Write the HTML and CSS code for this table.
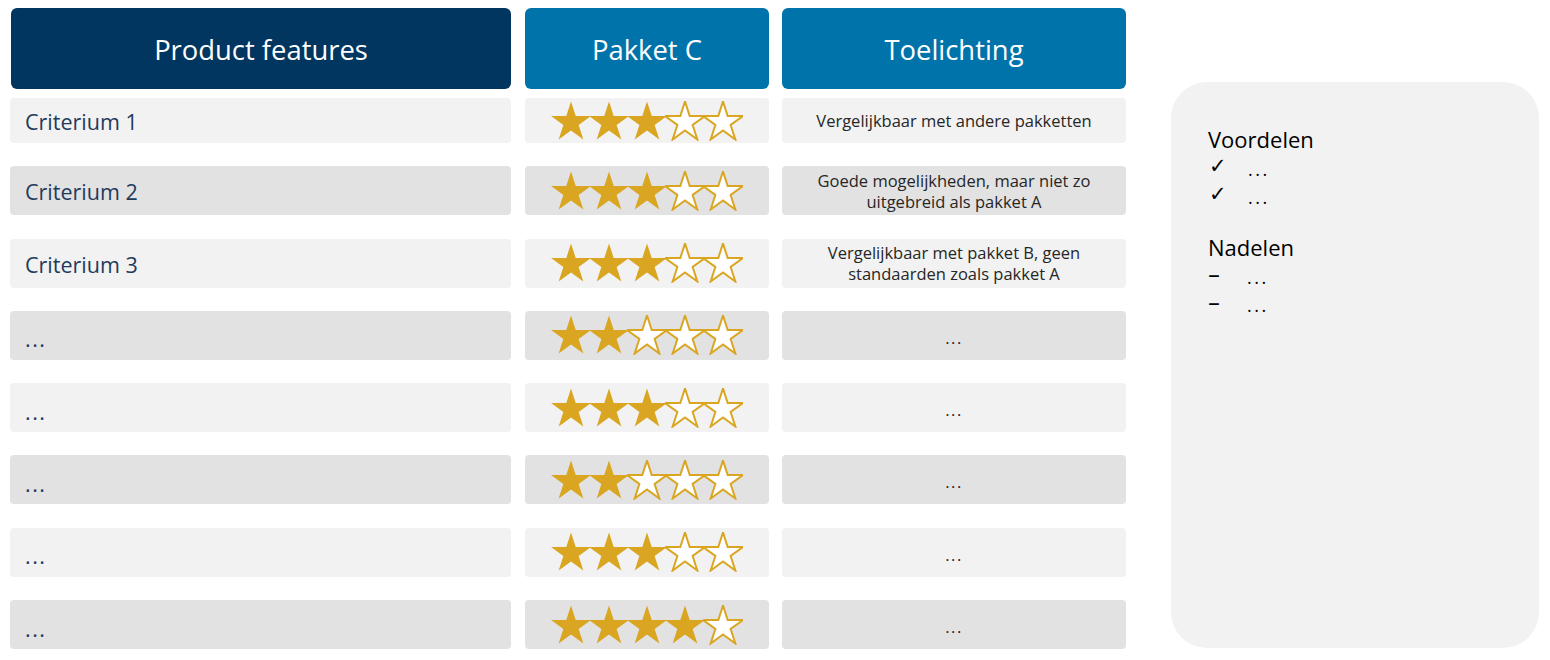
FILE: index.html
```html
<!DOCTYPE html>
<html lang="nl">
<head>
    <meta charset="UTF-8">
    <meta name="viewport" content="width=device-width, initial-scale=1.0">
    <title>Vergelijking Pakket C</title>
    <link rel="stylesheet" href="styles.css">
</head>
<body>
    <svg width="0" height="0" class="defs">
        <defs>
            <symbol id="star" viewBox="0 0 40 40">
                <polygon points="20,0.5 24.71,15.01 39.97,15.01 27.63,23.98 32.34,38.49 20,29.52 7.66,38.49 12.37,23.98 0.03,15.01 15.29,15.01"/>
            </symbol>
        </defs>
    </svg>
    <div class="page">
        <div class="matrix">
            <div class="head-row">
                <div class="head col-feature">Product features</div>
                <div class="head head-light col-rating">Pakket C</div>
                <div class="head head-light col-note">Toelichting</div>
            </div>
            <div class="rows" id="rows"></div>
        </div>
        <div class="summary">
            <h2>Voordelen</h2>
            <ul>
                <li><span class="mark">&#10003;</span><span class="more">...</span></li>
                <li><span class="mark">&#10003;</span><span class="more">...</span></li>
            </ul>
            <h2>Nadelen</h2>
            <ul>
                <li><span class="mark dash">&ndash;</span><span class="more">...</span></li>
                <li><span class="mark dash">&ndash;</span><span class="more">...</span></li>
            </ul>
        </div>
    </div>
    <script>
        const criteria = [
            { name: "Criterium 1", stars: 3, note: "Vergelijkbaar met andere pakketten" },
            { name: "Criterium 2", stars: 3, note: "Goede mogelijkheden, maar niet zo<br>uitgebreid als pakket A" },
            { name: "Criterium 3", stars: 3, note: "Vergelijkbaar met pakket B, geen<br>standaarden zoals pakket A" },
            { name: "...", stars: 2, note: "..." },
            { name: "...", stars: 3, note: "..." },
            { name: "...", stars: 2, note: "..." },
            { name: "...", stars: 3, note: "..." },
            { name: "...", stars: 4, note: "..." }
        ];

        function starSvg(count) {
            let uses = "";
            for (let i = 0; i < 5; i++) {
                const cls = i < count ? "full" : "empty";
                uses += `<use href="#star" class="${cls}" x="${i * 38}" y="0" width="40" height="40"/>`;
            }
            return `<svg class="stars" width="192" height="40" viewBox="0 0 192 40">${uses}</svg>`;
        }

        const rows = document.getElementById("rows");
        criteria.forEach((c, i) => {
            const row = document.createElement("div");
            row.className = "row" + (i % 2 ? " dark" : "") + (i === 0 ? " first" : "");
            row.innerHTML =
                `<div class="cell col-feature${c.name === "..." ? " dots" : ""}">${c.name}</div>` +
                `<div class="cell col-rating">${starSvg(c.stars)}</div>` +
                `<div class="cell col-note${c.note === "..." ? " dots" : ""}">${c.note}</div>`;
            rows.appendChild(row);
        });
    </script>
</body>
</html>
```

FILE: styles.css
```css
body {
    margin: 0;
    font-family: "Open Sans", Arial, sans-serif;
    background: #ffffff;
}
.defs {
    position: absolute;
}
.page {
    display: flex;
    align-items: flex-start;
    padding: 8px 0 0 10px;
    gap: 45px;
}
.matrix {
    display: flex;
    flex-direction: column;
    gap: 9px;
}
.head-row, .row {
    display: flex;
    gap: 14px;
}
.col-feature {
    width: 501px;
}
.col-rating {
    width: 244px;
    margin-right: -1px;
}
.col-note {
    width: 344px;
}
.head {
    height: 81px;
    border-radius: 6px;
    background-color: #00365f;
    color: #ffffff;
    font-size: 27.4px;
    display: flex;
    align-items: center;
    justify-content: center;
    padding-top: 2px;
    box-sizing: border-box;
}
.head-light {
    background-color: #0073aa;
}
.head-row .col-feature {
    margin-left: 1px;
    width: 500px;
}
.rows {
    display: flex;
    flex-direction: column;
    gap: 23.3px;
}
.cell {
    height: 49px;
    border-radius: 4px;
    background-color: #f2f2f2;
    display: flex;
    align-items: center;
    box-sizing: border-box;
}
.row.first .cell {
    height: 45px;
}
.row.dark .cell {
    background-color: #e2e2e2;
}
.cell.col-feature {
    padding: 2px 0 0 15px;
    color: #1f3b5c;
    font-size: 21.5px;
}
.cell.col-feature.dots {
    padding-top: 7px;
    letter-spacing: 1.5px;
}
.cell.col-rating {
    justify-content: center;
}
.cell.col-note {
    justify-content: center;
    text-align: center;
    color: #262626;
    font-size: 16.5px;
    line-height: 21px;
}
.cell.col-note.dots {
    padding-top: 4px;
    letter-spacing: 1.5px;
}
.stars {
    overflow: visible;
}
.stars .full {
    fill: #daa520;
}
.stars .empty {
    fill: #ffffff;
    stroke: #daa520;
    stroke-width: 2;
}
.summary {
    margin-top: 74px;
    width: 368px;
    height: 566px;
    box-sizing: border-box;
    border-radius: 36px;
    background-color: #f2f2f2;
    padding: 43px 0 0 37px;
    color: #000000;
}
.summary h2 {
    margin: 0;
    font-size: 22px;
    font-weight: normal;
    line-height: 28px;
}
.summary ul {
    list-style: none;
    margin: 0 0 24px 0;
    padding: 0;
}
.summary li {
    display: flex;
    align-items: center;
    height: 28px;
}
.more {
    font-size: 18px;
    line-height: 22px;
    letter-spacing: 2.5px;
    padding-top: 4px;
}
.mark {
    width: 39px;
    font-family: "DejaVu Sans", sans-serif;
    font-size: 21px;
    line-height: 22px;
    font-weight: bold;
    padding-left: 1px;
    padding-bottom: 3px;
}
.mark.dash {
    padding-left: 0;
    padding-bottom: 0;
    font-weight: normal;
    font-size: 24px;
}
```
